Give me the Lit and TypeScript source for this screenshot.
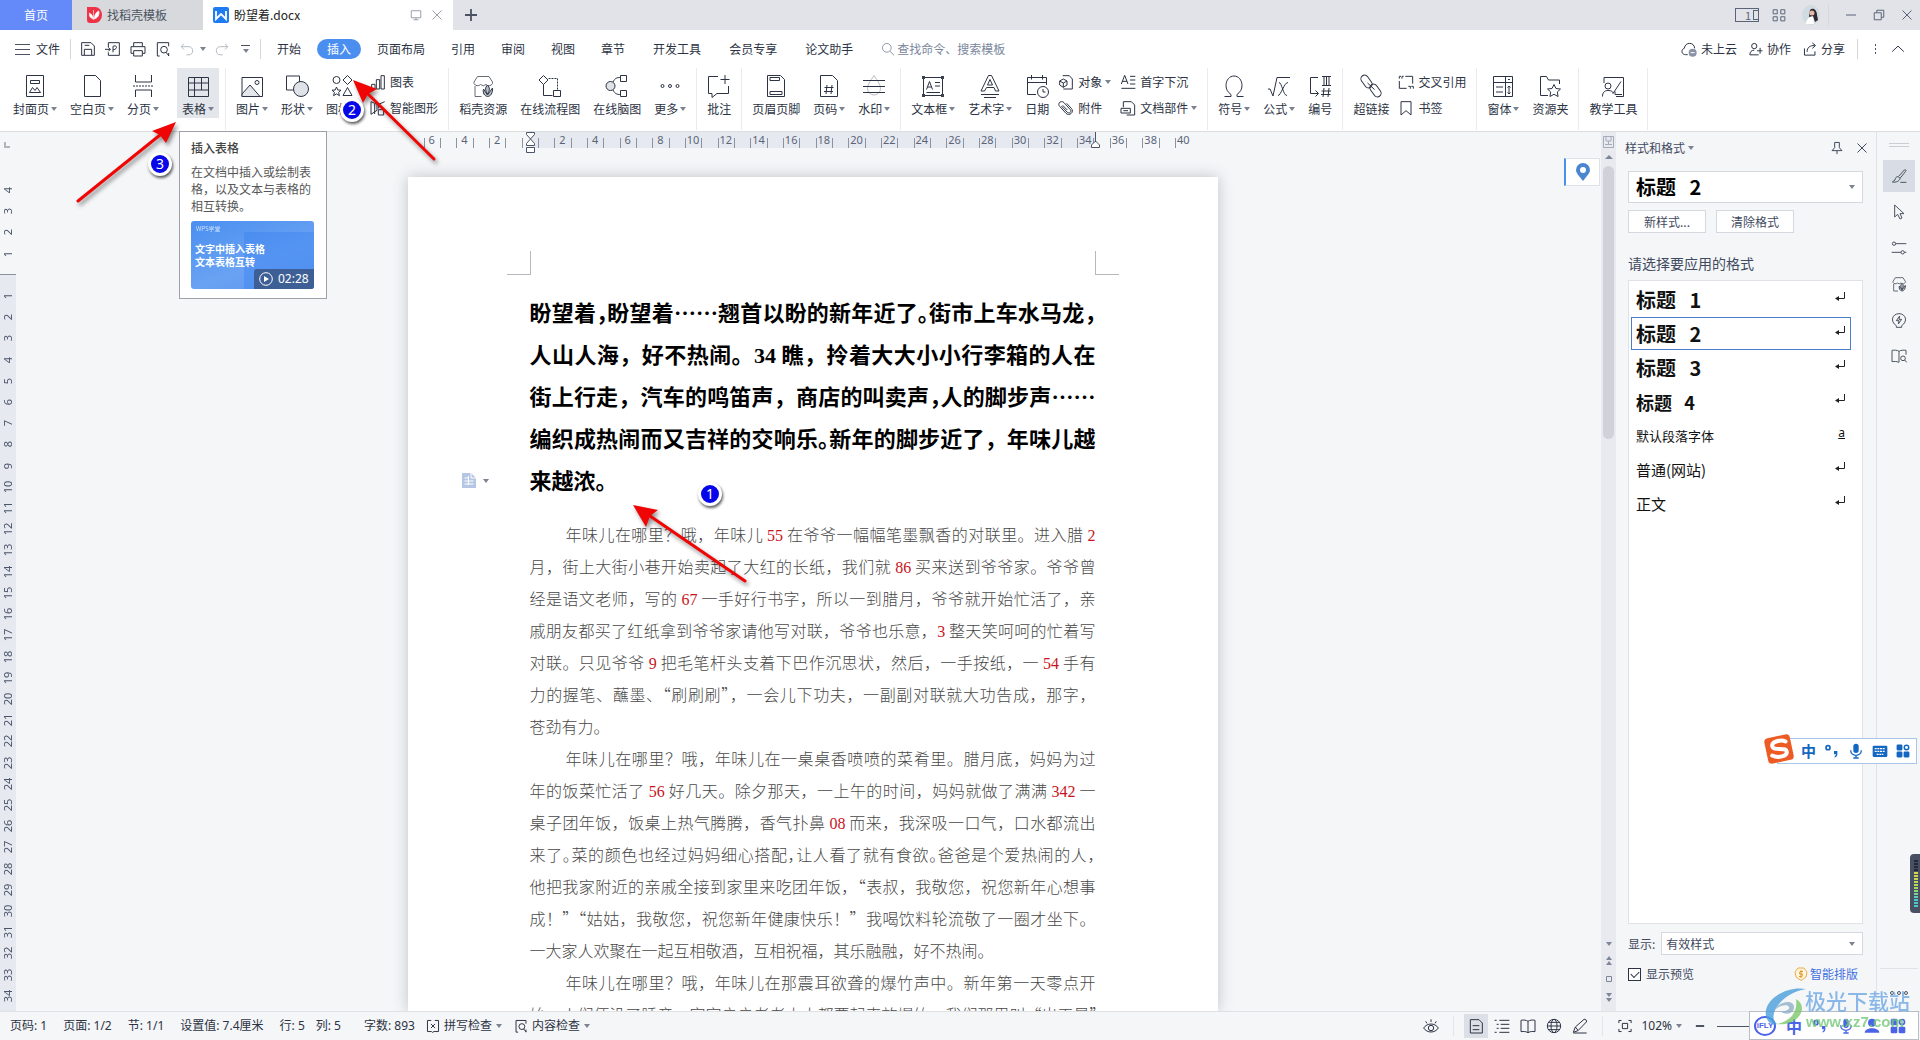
import { LitElement, html, svg, css, nothing, TemplateResult, SVGTemplateResult } from "lit";
import { customElement, state } from "lit/decorators.js";
import { classMap } from "lit/directives/class-map.js";

const ICONS: Record<string, SVGTemplateResult> = {
  cover: svg`<path d="M3.500 1.500h17v21h-17z"/><path d="M7.500 6.500h9v3h-9zM6.500 18.500l3-5 2.500 3 2-3 3.500 5z"/>`,
  blank: svg`<path d="M4.500 1.500h11l5 5v16h-16z" stroke-linejoin="round"/>`,
  split: svg`<path d="M4.500 1v7h16V1M4.500 23v-7h16v7"/><path d="M2 12h21" stroke-dasharray="2 1"/>`,
  table: svg`<path d="M2.500 3.500h20v19h-20zM2.500 9h20M2.500 16h20M8.500 3.500v19M15.500 3.500v12.500"/>`,
  image: svg`<path d="M2 3.500h20.500v19H2z"/><path d="M2 20l8-9 10 11.500H2z" fill="#e3e6ea"/><circle cx="17" cy="8.500" r="2"/>`,
  shapes: svg`<path d="M1.500 2h13v14h-13z"/><circle cx="16" cy="15" r="7.500" fill="#dfe3e8"/>`,
  iconset: svg`<circle cx="6.500" cy="6" r="3.500"/><path d="M17.500 1.500l4.500 4.500-4.500 4.500L13 6z"/><path d="M6.500 13l1.300 3 3.200.2-2.400 2.200.8 3.300-2.900-1.800-2.900 1.800.8-3.300L2 16.200l3.200-.2zM17.500 13.500l4.500 8h-9z"/>`,
  chart: svg`<path d="M2.500 15.500h5v7h-5zM9.500 8.500h5v14h-5zM16.500 2.500h5v20h-5z"/>`,
  smart: svg`<path d="M1.500 2.500l9 4v9l-9 6zM22 2.500l-9 4v6M7 6v15"/><path d="M12.500 14.500h8v8h-8z"/>`,
  store: svg`<path d="M3 9.500a4 4 0 0 0 6.500 1 4 4 0 0 0 5.500 0 4 4 0 0 0 6.500-1V8l-3.500-5.500H6.500L3 8zM4 12v10.500h6.500" stroke="#666c76"/><path d="M16.500 11c2.500 2.500 2.500 5.500 0 9-2.500-3.500-2.500-6.500 0-9zM12.500 15c-1 4 1 7 4 7.500 3 0 5.500-3.500 5-8.500l-5 7z" fill="#b9bdc4"/>`,
  flow: svg`<path d="M5.500 1.500L10 6l-4.500 4.500L1 6z"/><path d="M10.500 4.500h9v11" stroke-dasharray="2 1"/><path d="M5.500 10.500v11h9"/><path d="M15.500 16.500h7v6h-7z"/>`,
  mind: svg`<path d="M8 8c2-4 4-4.500 7.500-4.500M8 16c2 4 4 4.500 7.500 4.500"/><circle cx="5.500" cy="12" r="4.500" fill="#dfe3e8"/><path d="M15.500 1.500h6v6h-6zM15.500 16.500h6v6h-6z"/>`,
  more: svg`<circle cx="4.500" cy="12" r="1.500"/><circle cx="12" cy="12" r="1.500"/><circle cx="19.500" cy="12" r="1.500"/>`,
  comment: svg`<path d="M11 2.500H1.500v17H5v4l5-4h11.500V12M18 1v9M13.500 5.500h9"/>`,
  header: svg`<path d="M3.500 1.500h13l4 4v17h-17z"/><path d="M6 3.500h9.500v3H6zM6 17.500h12v3H6z"/>`,
  pageno: svg`<path d="M3.500 1.500h12l5 5v16h-17z"/><path d="M10 11l-1 9M15 11l-1 9M7.500 13.500h9M7 17.500h9"/>`,
  watermark: svg`<path d="M12 1.500c4 6 6.500 9.500 6.500 13a6.500 6.500 0 0 1-13 0C5.500 11 8 7.500 12 1.500z" stroke="#b5bac3"/><path d="M1 6.500h22M1 12.500h22M1 18.500h22"/>`,
  textbox: svg`<path d="M2.500 3.500h19v18h-19z"/><path d="M1 2h3v3H1zM20 2h3v3h-3zM1 20h3v3H1zM20 20h3v3h-3z" fill="#3b4250" stroke="none"/><path d="M5.500 15.500l3-8 3 8M6.500 13h4M14 8.500h5M14 12h5M5.500 18.500h13.500"/>`,
  wordart: svg`<path d="M3 17L10.500 1.500h3L21 17h-3.500l-1.500-3.500H8.500L6.500 17zM9.500 11L12 5.500l2.500 5.500z"/><path d="M3 20.500h18M6 23.500h12"/>`,
  date: svg`<path d="M11 20.500H2.500V3.500h19V11M2.500 8.500h19M6.500 1v4.500M17.500 1v4.500"/><circle cx="18" cy="18" r="5.500"/><path d="M18 15v3h2.500"/>`,
  object: svg`<path d="M7 2.500h10l4.500 5v15H8"/><path d="M8 7.500l5.500 3v6L8 20l-5.500-3.500v-6zM2.500 10.500L8 13.500l5.500-3M8 13.500V20"/>`,
  clip: svg`<path d="M5 9l9 9.500c3 2.500 7-1 4.500-4L9 4C5-.5-1.500 5 2.500 9.500L12 20c5 5 13-2 8-7.500L13 5M14 15L7 8"/>`,
  dropcap: svg`<path d="M2 15L7 2l5 13M3.500 11h7M15 3.500h8M15 9h8M15 15h8M2 21.500h21"/>`,
  parts: svg`<path d="M5 11V2.500h12l5 5v15H10"/><path d="M1.500 12.500h14v7h-14zM5 16h7" />`,
  omega: svg`<path d="M2.500 22.500H9v-2C5.500 18 4 15 4 11.500 4 6 7.500 2 12 2s8 4 8 9.500c0 3.500-1.500 6.500-5 9v2h6.500"/>`,
  formula: svg`<path d="M1 15h2l3 7L10 3.500h13M11 21.500c3 0 6-13 10-13M12 8.500c3 0 4 13 8 13"/>`,
  numbering: svg`<path d="M10 3.500H2.500v16H10M7.500 16.500l3 3-3 3M14 2.500h9M14 11.500h9M16 2.500v9M18.500 2.500v9M21 2.500v9M16 14l-1 9M21 14l-1 9M13.500 17h9.500M13 20.500h9.500"/>`,
  link: svg`<rect x="-3.700" y="-7" width="7.400" height="14" rx="3.700" transform="translate(7.500 7.500) rotate(-35)"/><rect x="-3.700" y="-7" width="7.400" height="14" rx="3.700" transform="translate(16.500 16.500) rotate(-35)"/><path d="M8.500 9l7 6.500"/>`,
  xref: svg`<path d="M2 7V3.500h2.500M6 7V3.500h2.500M11 3.500h11v11M2 10.500v11h11M15.500 18.500h3V22M20 18.500h3V22"/>`,
  bookmark: svg`<path d="M4.500 2.500h15v20L12 16l-7.500 6.500z"/>`,
  form: svg`<path d="M2.500 2.500h19v20h-19zM2.500 8.500h19M14.500 2.500v20M5 13h7M5 18h7M18 12v8M17 5l1 1 1-1M16.500 13.500L18 12l1.500 1.500M16.500 18.500L18 20l1.500-1.500"/>`,
  folder: svg`<path d="M10 21.500H2.500v-19h6l2 3.500h11V10"/><path d="M16 10.500l2 4 4.500.5-3.200 3 .8 4.500-4.100-2.200-4.100 2.200.8-4.500-3.200-3 4.500-.5z"/>`,
  teach: svg`<path d="M3 9V3.500h19.500v19H15"/><circle cx="7" cy="12" r="3"/><path d="M1.500 22.500c0-4 2-6 5.500-6s5 1 5 3l8-12M14 17.500v3h7"/>`,
  save: svg`<path d="M2.500 2.500h14l5 5v14h-19zM6.500 21v-8.500h11V21M7 6.500h7"/>`,
  export: svg`<path d="M5 9V2.500h16.500v19H5V17M0 12.500h8l-3-3M8 12.500l-3 3M12 17V8c6-3 8 4 0 5.500"/>`,
  print: svg`<path d="M5.500 8V2.500h13V8M5 18.500H1.500V8.500h21v10H19M5.500 14.500h13v8h-13z"/>`,
  preview: svg`<path d="M7 22.500H3.500v-20h17V8M20.500 18v4.500"/><circle cx="13.500" cy="13" r="5"/><path d="M16.500 17l4.500 5.500"/>`,
  undo: svg`<path d="M7 3L2 8l5 5M2.500 8H15c9 0 9 14 0 14h-4"/>`,
  redo: svg`<path d="M17 3l5 5-5 5M21.500 8H9c-9 0-9 14 0 14h4"/>`,
  search: svg`<circle cx="10" cy="10" r="7.500"/><path d="M15.500 16l7 7"/>`,
  cloud: svg`<path d="M10 20.500H7C0 20.500 0 12 5 11c1-10 15-10 15.500 0"/><circle cx="17.500" cy="17.500" r="6" fill="#8a92a6" stroke="none"/><path d="M14.500 17.500h6" stroke="#fff"/>`,
  collab: svg`<circle cx="9" cy="7" r="4.500"/><path d="M9 14c-5 0-7.500 3-7.500 8h15M19 10v10M14 15h9"/>`,
  share: svg`<path d="M2.500 11v11.500h18V16M7 17c0-8 5-11 13-11M16 1.500L21.500 6 16 11"/>`,
  up: svg`<path d="M2 16.500L12 7l10 9.500"/>`,
  close: svg`<path d="M3 3l18 18M21 3L3 21"/>`,
  minimize: svg`<path d="M2 12h20"/>`,
  restore: svg`<path d="M2.500 7.500h14v14h-14zM7.500 7V2.500h14v14H17"/>`,
  monitor: svg`<path d="M2.500 3.500h19v14h-19zM12 17.500v4M7 21.500h10"/>`,
  grid: svg`<path d="M2 3h7v7H2zM15 3h7v7h-7zM2 15h7v7H2zM15 15h7v7h-7z"/>`,
  pin: svg`<path d="M8 2.500h8v9l4.500 5h-17l4.500-5zM12 16.500v6"/>`,
  brush: svg`<path d="M11 13L20 3c1.500-1.500 3.500.5 2 2L13.500 15.500zM10.500 13c-3 0-4 2-4.500 5l-4 3c5 1 11-1 11.500-5.500M14 21.500h9"/>`,
  cursor: svg`<path d="M5.500 1.500v18l4.500-4 3.500 7 3-1.500-3-6.500h6z"/>`,
  sliders: svg`<circle cx="4.500" cy="5.500" r="2.500"/><path d="M7 5.500h16M1 18.500h14M20 18.500h3"/><circle cx="17.500" cy="18.500" r="2.500"/>`,
  bulb: svg`<path d="M8 20.500C-2 14 2 2.500 12 2.500s14 11.500 4 18v2.500H8zM13 6l-5 7h4l-1 5 5-7h-4z"/>`,
  bookfind: svg`<path d="M12 5C9 3 5 3 1.500 3.500v17c4-.5 7-.5 10.500 1zM12 5c3-2 7-2 10.500-1.500V10"/><circle cx="18" cy="15.500" r="3.500"/><path d="M20.500 18l3 3.500"/>`,
  eye: svg`<path d="M1 15c5-8 17-8 22 0-5 8-17 8-22 0zM4 5l2 3M12 2v4M20 5l-2 3"/><circle cx="12" cy="15" r="4"/>`,
  page: svg`<path d="M3.500 2.500h13l5 5v15h-18zM7 11.500h10M7 17.500h10"/>`,
  outline: svg`<path d="M1 3.500h3M8 3.500h15M4 9.500h3M10 9.500h13M4 15.500h3M10 15.500h13M1 21.500h3M8 21.500h15"/>`,
  book: svg`<path d="M12 5C9 3 5 2.500 1.500 3.500v17c4-.5 7-.5 10.500 1.500 3.500-2 6.500-2 10.500-1.500v-17C19 2.500 15 3 12 5zV22"/>`,
  globe: svg`<circle cx="12" cy="12" r="10"/><ellipse cx="12" cy="12" rx="4.500" ry="10"/><path d="M2 12h20M4 6.500h16M4 17.500h16"/>`,
  pen: svg`<path d="M2 21.500l3-8L18 2c2-1 5 2 3.500 4L9 19zM5 13.500l4 5M2 22.500h20"/>`,
  fit: svg`<path d="M1.500 7V2.500H6M18 2.500h4.500V7M22.500 17v4.500H18M6 21.500H1.500V17M7.500 7.500h9v9h-9z"/>`,
  spell: svg`<path d="M9 2.500H2.500v19h7l2 1.500 2-1.500h8v-19H15M8.500 8.500l7 7M15.500 8.500l-7 7"/>`,
  mic: svg`<rect x="8" y="1" width="8" height="14" rx="4" fill="currentColor" stroke="none"/><path d="M4 11c0 10 16 10 16 0M12 18v4M8 22.500h8" stroke-width="2"/>`,
  keyboard: svg`<rect x="1" y="4" width="22" height="17" rx="2" fill="currentColor" stroke="none"/><path d="M4 8.500h16M4 12.500h16M7 17h10" stroke="#fff" stroke-width="2" stroke-dasharray="3 1"/>`,
  apps: svg`<g fill="currentColor" stroke="none"><rect x="1" y="1" width="10" height="10" rx="2"/><rect x="1" y="13" width="10" height="10" rx="2"/><rect x="13" y="13" width="10" height="10" rx="2"/></g><circle cx="18" cy="6" r="3.800" stroke-width="2.500"/>`,
  person: svg`<g fill="currentColor" stroke="none"><circle cx="12" cy="7" r="6"/><path d="M1 22c0-9 22-9 22 0z"/></g>`,
  punct: svg`<circle cx="6" cy="7" r="3" stroke-width="2.500"/><path d="M15 12h5v5c0 3-2 4-4 5v-2c1-1 2-1 2-3h-3z" fill="currentColor" stroke="none"/>`,
};

const icon = (name: string, cls = "i22") =>
  html`<svg class="ico ${cls}" viewBox="0 0 24 24" aria-hidden="true">${ICONS[name]}</svg>`;
const caret = html`<i class="caret"></i>`;

type Tool = { icon: string; label: string; drop?: boolean; active?: boolean };
type Entry = Tool | Tool[];
const t = (icon: string, label: string, drop = false, active = false): Tool => ({ icon, label, drop, active });

const RIBBON: { sep: boolean; items: Entry[] }[] = [
  { sep: false, items: [t("cover", "封面页", true), t("blank", "空白页", true), t("split", "分页", true)] },
  { sep: true, items: [t("table", "表格", true, true)] },
  { sep: true, items: [t("image", "图片", true), t("shapes", "形状", true), t("iconset", "图标", true), [t("chart", "图表"), t("smart", "智能图形")]] },
  { sep: true, items: [t("store", "稻壳资源"), t("flow", "在线流程图"), t("mind", "在线脑图"), t("more", "更多", true)] },
  { sep: true, items: [t("comment", "批注")] },
  { sep: true, items: [t("header", "页眉页脚"), t("pageno", "页码", true), t("watermark", "水印", true)] },
  { sep: true, items: [t("textbox", "文本框", true), t("wordart", "艺术字", true), t("date", "日期"), [t("object", "对象", true), t("clip", "附件")], [t("dropcap", "首字下沉"), t("parts", "文档部件", true)]] },
  { sep: true, items: [t("omega", "符号", true), t("formula", "公式", true), t("numbering", "编号")] },
  { sep: true, items: [t("link", "超链接"), [t("xref", "交叉引用"), t("bookmark", "书签")]] },
  { sep: true, items: [t("form", "窗体", true), t("folder", "资源夹")] },
  { sep: true, items: [t("teach", "教学工具")] },
];

/* Punctuation in braces is set at half width. */
const HEADING = [
  "盼望着{，}盼望着……翘首以盼的新年近了{。}街市上车水马龙{，}",
  "人山人海，好不热闹。34 瞧，拎着大大小小行李箱的人在",
  "街上行走，汽车的鸣笛声，商店的叫卖声{，}人的脚步声……",
  "编织成热闹而又吉祥的交响乐{。}新年的脚步近了，年味儿越",
  "来越浓。",
];
const PARAGRAPHS = [
  [
    "年味儿在哪里？哦，年味儿 55 在爷爷一幅幅笔墨飘香的对联里。进入腊 2",
    "月，街上大街小巷开始卖起了大红的长纸，我们就 86 买来送到爷爷家。爷爷曾",
    "经是语文老师，写的 67 一手好行书字，所以一到腊月，爷爷就开始忙活了，亲",
    "戚朋友都买了红纸拿到爷爷家请他写对联，爷爷也乐意，3 整天笑呵呵的忙着写",
    "对联。只见爷爷 9 把毛笔杆头支着下巴作沉思状，然后，一手按纸，一 54 手有",
    "力的握笔、蘸墨、“刷刷刷”，一会儿下功夫，一副副对联就大功告成，那字，",
    "苍劲有力。",
  ],
  [
    "年味儿在哪里？哦，年味儿在一桌桌香喷喷的菜肴里。腊月底，妈妈为过",
    "年的饭菜忙活了 56 好几天。除夕那天，一上午的时间，妈妈就做了满满 342 一",
    "桌子团年饭，饭桌上热气腾腾，香气扑鼻 08 而来，我深吸一口气，口水都流出",
    "来了{。}菜的颜色也经过妈妈细心搭配{，}让人看了就有食欲{。}爸爸是个爱热闹的人{，}",
    "他把我家附近的亲戚全接到家里来吃团年饭，“表叔，我敬您，祝您新年心想事",
    "成！”“姑姑，我敬您，祝您新年健康快乐！”我喝饮料轮流敬了一圈才坐下。",
    "一大家人欢聚在一起互相敬酒，互相祝福，其乐融融，好不热闹。",
  ],
  [
    "年味儿在哪里？哦，年味儿在那震耳欲聋的爆竹声中。新年第一天零点开",
    "始，人们便没了睡意，家家户户老老小小都要起来放爆竹，我们那里叫“出天星”",
  ],
];

const rich = (line: string) =>
  line.split(/(\{.\}|\d+)/).map((p) =>
    p.startsWith("{") ? html`<span class="half">${p[1]}</span>` : /^\d+$/.test(p) ? html`<span class="num">${p}</span>` : p
  );

const STYLES = [
  { name: "标题 1", cls: "s1" },
  { name: "标题 2", cls: "s2" },
  { name: "标题 3", cls: "s3" },
  { name: "标题 4", cls: "s4" },
  { name: "默认段落字体", cls: "s5" },
  { name: "普通(网站)", cls: "s6" },
  { name: "正文", cls: "s7" },
];

@customElement("app-root")
export class AppRoot extends LitElement {
  @state() private style2 = 1;
  @state() private tab = "插入";

  static styles = css`
    :host {
      display: flex;
      flex-direction: column;
      position: relative;
      height: 100vh;
      overflow: hidden;
      background: #f5f6f8;
      color: #2c3344;
      font: 12px/16px "Noto Sans CJK SC", sans-serif;
    }
    * { box-sizing: border-box; }
    button, select, input { font: inherit; color: inherit; margin: 0; }
    button { border: 0; background: none; padding: 0; white-space: nowrap; }
    .ico { fill: none; stroke: currentColor; stroke-width: 1; display: block; flex: none; overflow: visible; }
    .i10 { width: 10px; height: 10px; stroke-width: 4; }
    .i12 { width: 12px; height: 12px; stroke-width: 2; }
    .i14 { width: 14px; height: 14px; stroke-width: 1.7; }
    .i16 { width: 16px; height: 16px; stroke-width: 1.5; }
    .i22 { width: 24px; height: 24px; }
    .caret { display: inline-block; flex: none; border: 3px solid transparent; border-top: 4px solid #7b8291; border-bottom: 0; }

    /* title bar */
    .title { display: flex; height: 30px; background: #e1e3e8; flex: none; }
    .title .tab { display: flex; align-items: center; gap: 5px; color: #4b5362; }
    .title .home { width: 72px; background: #6489f8; color: #fff; justify-content: center; }
    .title .tpl { width: 131px; background: #d7d9dc; padding-left: 14px; }
    .title .doc { width: 250px; background: #fff; color: #222; padding: 0 10px; }
    .title .doc .name { flex: 1; text-align: left; }
    .title .doc .ico { color: #9aa0aa; margin-left: 4px; }
    .logo { width: 16px; height: 16px; flex: none; }
    .title .plus { width: 36px; display: grid; place-items: center; color: #4b5362; }
    .win { margin-left: auto; display: flex; align-items: center; gap: 16px; padding-right: 7px; color: #5a6478; }
    .win .tight { display: flex; align-items: center; gap: 13px; margin-right: -8px; }
    .onebox { width: 24px; height: 14px; border: 1px solid #5a6478; display: flex; align-items: center; justify-content: flex-end; gap: 2px; font-size: 11px; line-height: 12px; }
    .onebox i { width: 5px; height: 10px; border: 1px solid #5a6478; border-right: 0; }
    .avatar { width: 18px; height: 20px; margin-left: 3px; }
    .vline { width: 1px; height: 20px; background: #d3d6dc; flex: none; }

    /* menu row */
    .menu { display: flex; align-items: center; height: 38px; background: #fff; padding: 0 15px; flex: none; }
    .file { display: flex; align-items: center; gap: 6px; width: 55px; }
    .burger { width: 15px; height: 11px; border: solid #4b5362; border-width: 1px 0; background: linear-gradient(#4b5362, #4b5362) 0 4px / 100% 1px no-repeat; }
    .quick { display: flex; align-items: center; gap: 9px; padding: 0 10px 0 9px; width: 189px; }
    .quick .dim { color: #b3b8c1; display: flex; align-items: center; gap: 6px; }
    .quick .more { width: 9px; height: 8px; border-top: 1px solid #4b5362; display: grid; place-items: end center; margin-left: auto; }
    .tabs { display: flex; gap: 26px; padding-left: 16px; }
    .tabs.wide { gap: 28px; padding-left: 28px; }
    .tabs button { height: 20px; }
    .tabs .on { background: #4a8ff0; color: #fff; border-radius: 10px; padding: 0 10px; margin: 0 -10px; }
    .search { display: flex; align-items: center; gap: 2px; margin-left: 28px; color: #8c97ab; }
    .search input { width: 130px; border: 0; outline: 0; padding: 0; background: none; }
    .search input::placeholder { color: #7a869c; opacity: 1; }
    .cloudbar { margin-left: auto; display: flex; align-items: center; gap: 12px; }
    .cloudbar button { display: flex; align-items: center; gap: 4px; }
    .cloudbar .dots { width: 3px; height: 13px; margin: 0 2px 0 4px; background: radial-gradient(circle, #4b5362 1px, transparent 1px) 0 0 / 3px 4px; }

    /* ribbon */
    .ribbon { display: flex; height: 64px; background: #fff; padding-left: 3px; border-bottom: 1px solid #dcdee2; flex: none; align-items: flex-start; }
    .group { display: flex; gap: 13px; padding: 0 10px; height: 62px; }
    .group.sep { border-right: 1px solid #e9ebee; }
    .tool { display: flex; flex-direction: column; align-items: center; gap: 3px; height: 50px; padding-top: 6px; }
    .tool .lab { display: flex; align-items: center; gap: 2px; }
    .group .hot { background: #e3e6eb; padding: 6px 5px 0; margin: 0 -4px 0 -2px; }
    .stack { display: flex; flex-direction: column; gap: 10px; padding-top: 6px; margin-left: -4px; }
    .stack:nth-child(4):last-child { margin-left: -1px; }
    .stack button { display: flex; align-items: center; gap: 4px; }
    .stack .lab { display: flex; align-items: center; gap: 3px; }

    /* middle */
    .main { flex: 1; display: flex; min-height: 0; }
    .vruler { width: 16px; flex: none; display: grid; grid-auto-rows: 1fr; padding: 47px 0 5px; font: 11px/12px "Noto Sans", sans-serif; color: #4b5568;
      background: linear-gradient(#f5f6f8 142px, #8a919e 142px 143px, #e6e9f0 143px); position: relative; }
    .vruler span { writing-mode: vertical-rl; transform: rotate(180deg); display: grid; place-items: center; min-height: 0; line-height: 16px; }
    .corner { position: absolute; left: 4px; top: 10px; width: 6px; height: 6px; border: solid #b1b5bd; border-width: 0 0 2px 2px; }
    .work { flex: 1; min-width: 0; position: relative; display: flex; flex-direction: column; align-items: center; overflow: hidden; }
    .hruler { position: relative; display: grid; grid-template-columns: repeat(47, 1fr); width: 768px; height: 16px; flex: none; margin-right: 2px; font: 11px/16px "Noto Sans", sans-serif; color: #5a6478;
      background: linear-gradient(90deg, transparent 106px, #e6e9f0 106px 671px, transparent 671px); }
    .hruler span { display: flex; justify-content: center; background: linear-gradient(#8a93a5, #8a93a5) 0 6px / 1px 10px no-repeat; }
    .hruler .mark { position: absolute; top: 0; width: 9px; height: 21px; overflow: visible; fill: #fff; stroke: #4b5568; }
    .mark.lm { left: 102px; }
    .mark.rm { left: 667px; }
    .page { width: 810px; flex: 1 0 auto; margin: 29px 0 0 8px; background: #fff; box-shadow: 0 0 14px rgba(70, 75, 85, 0.3); padding-top: 74px; }
    .crop { display: flex; justify-content: space-between; padding: 0 99px; }
    .crop i { width: 24px; height: 24px; border: solid #b5b8bd; border-width: 0 1px 1px 0; }
    .crop i + i { border-width: 0 0 1px 1px; }
    .text { padding: 15px 122px 0; position: relative; height: 0; }
    .text h2, .text p { margin: 0; }
    .line { display: block; white-space: nowrap; text-align: justify; text-align-last: justify; }
    .line:last-child { text-align-last: left; }
    .line.full:last-child { text-align-last: justify; }
    h2 { font-size: 22px; line-height: 42px; font-weight: 700; color: #000; }
    .num { font-family: "Liberation Serif", serif; line-height: 0; }
    p { font-size: 16px; line-height: 32px; font-weight: 300; color: #484848; }
    h2 + p { padding-top: 18px; }
    p .line:first-child { text-indent: 36px; }
    p .num { color: #c8141c; }
    .half { font-feature-settings: "halt"; }
    .para { position: absolute; left: 54px; top: 198px; display: flex; align-items: center; gap: 7px; }
    .para svg { width: 14px; height: 15px; }
    .bubble { position: absolute; right: 1px; top: 26px; width: 36px; height: 28px; background: #fff; border: 1px solid #dde1e8; border-left: 2px solid #4a8ff0; display: grid; place-items: center; }
    .bubble svg { width: 14px; height: 18px; }

    .vscroll { width: 15px; flex: none; background: #e8eaf0; display: flex; flex-direction: column; align-items: center; gap: 7px; padding-top: 4px; color: #7e8798; }
    .vscroll svg { display: block; flex: none; }
    .vscroll .thumb { width: 11px; height: 273px; border-radius: 6px; background: #cfd2d9; }
    .vscroll .end { margin-top: auto; padding-bottom: 7px; }

    .panel { width: 261px; flex: none; border-right: 1px solid #dfe2e7; display: flex; flex-direction: column; padding: 0 13px 0 12px; color: #3f4a60; }
    .phead { display: flex; align-items: center; height: 31px; gap: 3px; margin-left: -3px; }
    .phead .sp { margin-left: auto; }
    .phead .x { margin: 0 -5px 0 9px; }
    .box { position: relative; display: block; background: #fff; border: 1px solid #d5d8de; }
    .box select { appearance: none; width: 100%; height: 100%; border: 0; background: none; outline: 0; display: block; padding: 0 20px 0 4px; }
    .box .caret { position: absolute; right: 7px; top: 50%; margin-top: -2px; pointer-events: none; }
    .cur { height: 32px; margin-top: 8px; }
    .cur select { font-size: 20px; line-height: 28px; font-weight: 700; color: #000; padding-left: 7px; }
    .btns { display: flex; gap: 10px; margin-top: 7px; }
    .btns button { width: 78px; height: 23px; background: #fff; border: 1px solid #d5d8de; }
    .ask { font-size: 14px; line-height: 20px; margin-top: 20px; }
    .list { flex: 1; margin-top: 7px; background: #fff; border: 1px solid #dfe2e7; padding: 2px 11px 0 2px; display: flex; flex-direction: column; gap: 1px; }
    .list button { height: 33px; flex: none; display: flex; align-items: center; justify-content: space-between; border: 1px solid transparent; padding: 0 5px 0 4px; color: #111; }
    .list .sel { border-color: #4a7fc8; }
    .s1, .s2, .s3 { font-size: 20px; font-weight: 700; }
    .s4 { font-size: 18px; font-weight: 700; }
    .s5 { font-size: 13px; }
    .s6, .s7 { font-size: 15px; }
    .ret { width: 10px; height: 9px; fill: none; stroke: #222; margin-bottom: 6px; }
    .under { font: 12px/12px "Noto Sans", sans-serif; text-decoration: underline; margin-bottom: 6px; }
    .show { display: flex; align-items: center; gap: 6px; margin-top: 8px; height: 23px; }
    .show .box { flex: 1; height: 23px; }
    .chk { display: flex; align-items: center; height: 16px; margin: 11px 0 29px; }
    .chk label { display: flex; align-items: center; gap: 5px; }
    .chk input { appearance: none; width: 13px; height: 13px; border: 1px solid #2c3344; background: #fff; display: grid; place-items: center; }
    .chk input:checked::before { content: ""; width: 7px; height: 4px; border: solid #2c3344; border-width: 0 0 1px 1px; transform: rotate(-45deg); margin-top: -2px; }
    .chk a { margin-left: auto; display: flex; align-items: center; gap: 2px; color: #3f6fe0; text-decoration: none; padding-right: 5px; }
    .chk a svg { width: 14px; height: 14px; }

    .side { width: 43px; flex: none; display: flex; flex-direction: column; align-items: center; gap: 4px; color: #4b5362; }
    .side .grip { width: 20px; height: 4px; border: solid #c9cdd4; border-width: 1px 0; margin: 11px 0 9px; }
    .side button { width: 32px; height: 32px; display: grid; place-items: center; }
    .side .on { background: #d8dde5; }
    .side .foot { margin-top: auto; width: 38px; border-top: 1px solid #dfe2e7; height: 43px; padding-top: 22px; display: flex; justify-content: center; gap: 3px; }
    .side .foot i { width: 4px; height: 4px; border: 1px solid #4b5362; border-radius: 50%; }

    /* status bar */
    .status { display: flex; align-items: center; height: 29px; flex: none; border-top: 1px solid #dfe1e5; padding-left: 10px; white-space: nowrap; font-family: "Noto Sans", "Noto Sans CJK SC", sans-serif; }
    .status .cells { display: flex; align-items: center; gap: 16px; }
    .status .tick { display: flex; align-items: center; gap: 4px; }
    .status .pair { display: flex; gap: 11px; }
    .status .count { margin-left: 7px; }
    .status .checks { display: flex; gap: 12px; margin-left: -5px; }
    .views { margin-left: auto; display: flex; align-items: center; gap: 2px; color: #2c3344; }
    .views button { width: 24px; height: 24px; display: grid; place-items: center; }
    .views .on { background: #dcdfe6; }
    .views .vline { margin: 0 8px; background: #e3e5ea; }
    .views .zoom { display: flex; align-items: center; gap: 4px; width: auto; margin: 0 4px 0 2px; }
    .views input { appearance: none; width: 183px; height: 1px; background: #4b5362; margin: 0 20px 0 3px; }
    .views input::-webkit-slider-thumb { appearance: none; width: 7px; height: 13px; background: #4b5362; }

    /* floating windows */
    .tip { position: absolute; left: 179px; top: 131px; width: 148px; height: 168px; background: #fff; border: 1px solid #9ea2a8; padding: 7px 12px 0 11px; color: #575757; }
    .tip b { display: block; font-weight: 500; line-height: 17px; color: #444; }
    .tip .desc { line-height: 17px; padding: 7px 0; }
    .video { position: relative; height: 68px; border-radius: 3px; overflow: hidden; color: #fff; background: linear-gradient(160deg, #4a8ff0, #6aa2f3 60%, #5b97ef); font-size: 10px; line-height: 13px; font-weight: 700; padding: 21px 4px; }
    .video small { position: absolute; left: 5px; top: 2px; font-size: 6px; line-height: 12px; font-weight: 400; opacity: 0.7; }
    .video .ghost { position: absolute; left: 53px; top: 11px; right: 0; bottom: 0; background: rgba(60, 130, 240, 0.45); }
    .video .rows { position: relative; white-space: nowrap; }
    .dur { position: absolute; right: 0; bottom: 0; width: 60px; height: 20px; background: #3d5f95; border-radius: 3px 0 0 0; display: flex; align-items: center; gap: 5px; padding-left: 5px; font: 12px/20px "Noto Sans", sans-serif; }
    .dur svg { width: 14px; height: 14px; }
    .arrows { position: absolute; left: 0; top: 0; width: 800px; height: 620px; pointer-events: none; filter: drop-shadow(2px 3px 2px rgba(0, 0, 0, 0.45)); }
    .badge { position: absolute; width: 24px; height: 24px; border-radius: 50%; border: 3px solid #fff; background: #0606e8; color: #fff; text-align: center; font: 14px/18px "Noto Sans", sans-serif; box-shadow: 1px 2px 3px rgba(0, 0, 0, 0.65); }
    .b1 { left: 698px; top: 482px; }
    .b2 { left: 340px; top: 98px; }
    .b3 { left: 148px; top: 152px; }
    .ime { position: absolute; right: 3px; top: 738px; width: 140px; height: 26px; background: #fff; border: 1px solid #a9c6ea; display: flex; align-items: center; gap: 8px; padding-left: 23px; color: #1467c0; font-size: 15px; font-weight: 700; }
    .ime .s { position: absolute; left: -15px; top: -6px; width: 32px; height: 32px; }
    .ime2 { position: absolute; right: 1px; bottom: 0; width: 170px; height: 29px; background: #fff; border: 1px solid #b9bdc5; display: flex; align-items: center; gap: 10px; padding-left: 4px; color: #4a63e8; font-size: 16px; font-weight: 700; }
    .ifly { width: 22px; height: 20px; border: 2px solid #4a63e8; border-radius: 50%; font: bold 8px/16px "Liberation Sans", sans-serif; text-align: center; }
    .brand { position: absolute; right: 8px; bottom: 3px; width: 150px; height: 50px; pointer-events: none; opacity: 0.8; }
    .brand svg { position: absolute; left: 0; top: 0; width: 46px; height: 40px; }
    .brand .cn { position: absolute; left: 43px; top: 0; font-size: 21px; line-height: 26px; font-weight: 500; color: #6fa8e4; white-space: nowrap; }
    .brand .url { position: absolute; left: 44px; top: 24px; font: bold 15px/22px "Liberation Sans", sans-serif; color: #74c878; white-space: nowrap; }
    .meter { position: absolute; right: 0; top: 854px; width: 10px; height: 59px; border-radius: 4px 0 0 4px; background: #4a5063; padding: 6px 2px 6px 4px; }
    .meter i { display: block; height: 47px; background: repeating-linear-gradient(transparent 0 2px, #4a5063 2px 3px), linear-gradient(#22283a 12px, #d8d84a 12px, #a8d860 28px, #4cc8c8 40px); }
  `;

  private tool(x: Tool, small = false): TemplateResult {
    return html`<button class=${classMap({ tool: !small, hot: !!x.active })}>
      ${icon(x.icon, small ? "i16" : "i22")}
      <span class="lab">${x.label}${x.drop ? caret : nothing}</span>
    </button>`;
  }

  private tabs(names: string[], wide: boolean) {
    return html`<nav class=${classMap({ tabs: true, wide })}>
      ${names.map((n) => html`<button class=${n === this.tab ? "on" : ""} @click=${() => (this.tab = n)}>${n}</button>`)}
    </nav>`;
  }

  render() {
    return html`
      <header class="title">
        <button class="tab home">首页</button>
        <button class="tab tpl">
          <svg class="logo" viewBox="0 0 16 16"><path d="M1 0h8a7 8 0 0 1 0 16H4a3 3 0 0 1-3-3z" fill="#ee3346"/><path d="M7.500 13V6M7.500 12C4 11 3 9 3.500 6c2 1 3.500 3 4 6zM8 12c1-5 2-7 5-8 .500 4-1 7-5 8zM7.500 3v3" fill="#fff" stroke="#fff" stroke-width=".6"/></svg>
          找稻壳模板
        </button>
        <div class="tab doc">
          <svg class="logo" viewBox="0 0 16 16"><rect width="16" height="16" rx="2" fill="#1e7bf2"/><path d="M3 4v8l5-5 5 5V4" fill="none" stroke="#fff" stroke-width="1.800"/></svg>
          <span class="name">盼望着.docx</span>
          ${icon("monitor", "i12")}${icon("close", "i12")}
        </div>
        <button class="plus" aria-label="新建"><svg class="ico" width="12" height="12" viewBox="0 0 12 12"><path d="M6 0v12M0 6h12" stroke-width="1.800"/></svg></button>
        <div class="win">
          <div class="tight">
            <span class="onebox">1<i></i></span>${icon("grid", "i14")}
            <svg class="avatar" viewBox="0 0 18 20"><ellipse cx="9" cy="10" rx="9" ry="10" fill="#cfdbe0"/><path d="M8 5c3-3 7 0 7 5l1 5-3 2-2-6-4 1z" fill="#2e2530"/><circle cx="10" cy="8" r="2.500" fill="#e5b9a8"/><path d="M4 19c0-5 4-8 7-7l1 7z" fill="#fff"/></svg>
          </div>
          <i class="vline"></i>
          ${icon("minimize", "i12")}${icon("restore", "i12")}${icon("close", "i12")}
        </div>
      </header>

      <div class="menu">
        <button class="file"><i class="burger"></i>文件</button>
        <i class="vline"></i>
        <div class="quick">
          ${["save", "export", "print", "preview"].map((n) => icon(n, "i16"))}
          <span class="dim">${icon("undo", "i14")}${caret}</span>
          <span class="dim">${icon("redo", "i14")}</span>
          <span class="more">${caret}</span>
        </div>
        <i class="vline"></i>
        ${this.tabs(["开始", "插入", "页面布局", "引用", "审阅", "视图", "章节"], false)}
        ${this.tabs(["开发工具", "会员专享", "论文助手"], true)}
        <label class="search">${icon("search", "i14")}<input placeholder="查找命令、搜索模板" aria-label="查找命令" /></label>
        <div class="cloudbar">
          <button>${icon("cloud", "i16")}未上云</button>
          <button>${icon("collab", "i14")}协作</button>
          <button>${icon("share", "i14")}分享</button>
          <i class="vline"></i><i class="dots"></i>${icon("up", "i14")}
        </div>
      </div>

      <div class="ribbon">
        ${RIBBON.map(
          (g) => html`<div class="group ${g.sep ? "sep" : ""}">
            ${g.items.map((e) => (Array.isArray(e) ? html`<div class="stack">${e.map((x) => this.tool(x, true))}</div>` : this.tool(e)))}
          </div>`
        )}
      </div>

      <div class="main">
        <div class="vruler">
          <i class="corner"></i>
          ${Array.from({ length: 39 }, (_, i) => html`<span>${i === 4 ? "" : Math.abs(i - 4)}</span>`)}
        </div>
        <main class="work">
          <div class="hruler">
            ${Array.from({ length: 47 }, (_, i) => html`<span>${i % 2 || i === 6 ? "" : Math.abs(i - 6)}</span>`)}
            <svg class="mark lm" viewBox="0 0 9 21"><path d="M.5.500h8v2l-4 4.500-4-4.500zM4.500 7l4 4.500v2h-8v-2zM.5 15.500h8v5h-8z"/></svg>
            <svg class="mark rm" viewBox="0 0 9 21"><path d="M4.500 0v10M4.500 9l4 4v2.500h-8V13z"/></svg>
          </div>
          <article class="page">
            <div class="crop"><i></i><i></i></div>
            <div class="text" lang="zh-CN">
              <h2>${HEADING.map((l) => html`<span class="line">${rich(l)}</span>`)}</h2>
              ${PARAGRAPHS.map((p, n) => html`<p>${p.map((l) => html`<span class="line ${n === 2 ? "full" : ""}">${rich(l)}</span>`)}</p>`)}
              <span class="para">
                <svg viewBox="0 0 14 15"><path d="M0 0h9l5 5v10H0z" fill="#b4c6e4"/><path d="M2.500 5h4M2.500 8h9M2.500 11h9M6.500 3v9M9 0v5h5" stroke="#fff" fill="none"/></svg>${caret}
              </span>
            </div>
          </article>
          <div class="bubble"><svg viewBox="0 0 14 18"><path d="M7 18C3 13 0 10 0 7a7 7 0 0 1 14 0c0 3-3 6-7 11z" fill="#4a86d0"/><circle cx="7" cy="7" r="3" fill="#fff"/></svg></div>
        </main>
        <div class="vscroll">
          <svg width="11" height="12" viewBox="0 0 11 12" fill="none" stroke="#a5abb8"><path d="M.5.500h10v11H.5zM3 1v4h5V1M5.500 5v3M2 8.500h7"/></svg>
          <svg width="8" height="4" viewBox="0 0 8 4"><path d="M0 4l4-4 4 4z" fill="currentColor"/></svg>
          <i class="thumb"></i>
          <div class="end">
            <svg width="8" height="66" viewBox="0 0 8 66" fill="currentColor"><path d="M1 4h6L4 8zM1 22l3-4 3 4zM1 27l3-4 3 4zM1 55h6l-3 4zM1 60h6l-3 4z"/><path d="M1.500 38.500h5v5h-5z" fill="none" stroke="currentColor"/></svg>
          </div>
        </div>

        <aside class="panel">
          <div class="phead"><span>样式和格式</span>${caret}<span class="sp"></span>${icon("pin", "i14")}<span class="x">${icon("close", "i12")}</span></div>
          <label class="box cur"><select aria-label="当前样式"><option>标题&nbsp;&nbsp; 2</option></select>${caret}</label>
          <div class="btns"><button>新样式...</button><button>清除格式</button></div>
          <div class="ask">请选择要应用的格式</div>
          <div class="list">
            ${STYLES.map(
              (s, i) => html`<button class=${i === this.style2 ? "sel" : ""} @click=${() => (this.style2 = i)}>
                <span class=${s.cls}>${s.name.replace(" ", "\u00a0\u00a0 ")}</span>
                ${s.cls === "s5"
                  ? html`<span class="under">a</span>`
                  : html`<svg class="ret" viewBox="0 0 10 9"><path d="M9.500 0v6.500H2"/><path d="M0 6.500L4 4v5z" fill="#222" stroke="none"/></svg>`}
              </button>`
            )}
          </div>
          <div class="show"><label for="scope">显示:</label><span class="box"><select id="scope"><option>有效样式</option></select>${caret}</span></div>
          <div class="chk">
            <label><input type="checkbox" checked />显示预览</label>
            <a href="#"><svg viewBox="0 0 14 14"><path d="M4 1h6l3 4-1 5-5 3.500L2 10 1 5z" fill="#fff6e0" stroke="#e8ac4c"/><path d="M9 4.500H6L5.500 7h3L8 9.500H5M7 3v8" fill="none" stroke="#e09a2c"/></svg>智能排版</a>
          </div>
        </aside>
        <div class="side">
          <i class="grip"></i>
          ${["brush", "cursor", "sliders", "store", "bulb", "bookfind"].map((n, i) => html`<button class=${i ? "" : "on"} aria-label=${n}>${icon(n, "i16")}</button>`)}
          <div class="foot"><i></i><i></i><i></i></div>
        </div>
      </div>

      <footer class="status">
        <div class="cells">
          <span>页码: 1</span><span>页面: 1/2</span><span>节: 1/1</span><span>设置值: 7.4厘米</span>
          <span class="pair"><span>行: 5</span><span>列: 5</span></span><span class="count">字数: 893</span>
          <span class="checks">
            <button class="tick">${icon("spell", "i14")}拼写检查${caret}</button>
            <button class="tick">${icon("preview", "i14")}内容检查${caret}</button>
          </span>
        </div>
        <div class="views">
          <button aria-label="护眼模式">${icon("eye", "i16")}</button><i class="vline"></i>
          ${["page", "outline", "book", "globe", "pen"].map((n, i) => html`<button class=${i ? "" : "on"} aria-label=${n}>${icon(n, "i16")}</button>`)}
          <i class="vline"></i>
          <button aria-label="适合">${icon("fit", "i14")}</button>
          <button class="zoom">102% ${caret}</button>
          <button aria-label="缩小">${icon("minimize", "i10")}</button>
          <input type="range" aria-label="缩放" />
        </div>
      </footer>

      <div class="tip">
        <b>插入表格</b>
        <div class="desc">在文档中插入或绘制表格，以及文本与表格的相互转换。</div>
        <div class="video">
          <i class="ghost"></i><small>WPS学堂</small>
          <div class="rows">文字中插入表格<br />文本表格互转</div>
          <span class="dur"><svg viewBox="0 0 14 14"><circle cx="7" cy="7" r="6.300" fill="none" stroke="#fff"/><path d="M5 4l5 3-5 3z" fill="#fff"/></svg>02:28</span>
        </div>
      </div>

      <div class="ime">
        <svg class="s" viewBox="0 0 32 32"><g transform="rotate(-12 16 16)"><rect x="3" y="3" width="26" height="26" rx="4" fill="#ee5a24"/><path d="M24 10C20 7 10 7 10 12s13 3 13 8-10 5-15 1" fill="none" stroke="#fff" stroke-width="4" stroke-linecap="round"/></g></svg>
        <span>中</span>${icon("punct", "i16")}${icon("mic", "i16")}${icon("keyboard", "i16")}${icon("apps", "i14")}
      </div>
      <div class="meter"><i></i></div>
      <div class="ime2">
        <span class="ifly">iFLY</span><span>中</span>${icon("punct", "i16")}${icon("mic", "i16")}${icon("person", "i16")}${icon("apps", "i16")}
      </div>
      <div class="brand">
        <svg viewBox="0 0 46 40"><path d="M44 2C20-2-4 18 6 34c2 3 6 4 9 3C4 28 20 6 44 2z" fill="#4a9fdc"/><path d="M34 12c14 8 2 28-20 25 14-2 22-12 20-25z" fill="#7cc86a"/><path d="M12 24c4-10 20-12 20-4s-10 8-14 4c4 1 10-1 9-4s-10-2-15 4z" fill="#8fb0c8"/></svg>
        <span class="cn">极光下载站</span><span class="url">www.xz7.com</span>
      </div>

      <svg class="arrows" viewBox="0 0 800 620" aria-hidden="true">
        <g stroke="#f00505" stroke-width="3" stroke-linecap="round" fill="#f00505">
          <path d="M78 201L160 135"/><path d="M434 159L367 93"/><path d="M745 581L650 516"/>
          <g stroke="none"><path d="M176 122L166 143 160 135 152 131z"/><path d="M353 80L377 89 368 94 363 103z"/><path d="M633 505L658 510 650 516 646 527z"/></g>
        </g>
      </svg>
      <span class="badge b1">1</span><span class="badge b2">2</span><span class="badge b3">3</span>
    `;
  }
}
